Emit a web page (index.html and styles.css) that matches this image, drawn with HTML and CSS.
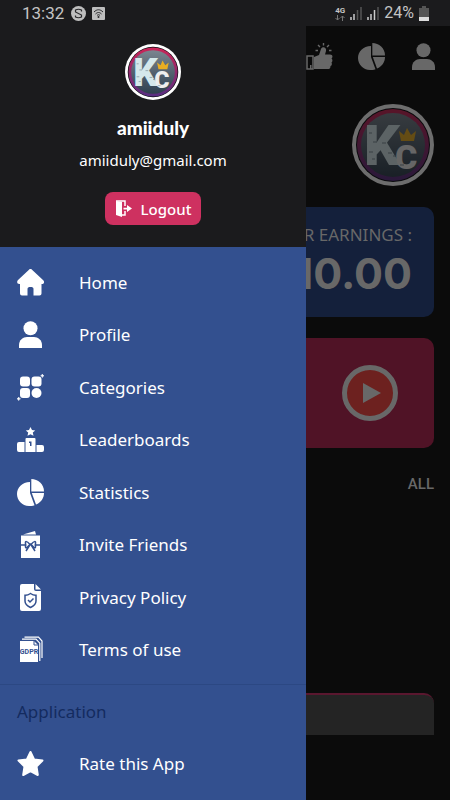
FILE: index.html
```html
<!DOCTYPE html>
<html lang="en">
<head>
<meta charset="utf-8">
<meta name="viewport" content="width=device-width, initial-scale=1">
<title>Menu</title>
<link rel="stylesheet" href="styles.css">
</head>
<body>
<svg class="defs" aria-hidden="true">
  <defs>
    <linearGradient id="ring" x1="0" y1="0" x2="0" y2="1"><stop offset="0" stop-color="#cc2456"/><stop offset="1" stop-color="#572e82"/></linearGradient>
    <linearGradient id="disc" x1="0" y1="0" x2="0" y2="1"><stop offset="0" stop-color="#7a8590"/><stop offset="1" stop-color="#2f4050"/></linearGradient>
    <symbol id="logo" viewBox="0 0 82 82">
      <circle cx="41" cy="41" r="41" fill="#fff"/>
      <circle cx="41" cy="41" r="37" fill="#080a0f"/>
      <circle cx="41" cy="41" r="36" fill="url(#ring)"/>
      <circle cx="41" cy="41" r="32" fill="url(#disc)"/>
      <text class="logo-k" x="12" y="61">K</text>
      <text class="logo-c" x="43" y="65">C</text>
      <path d="M49 37L47 27L52 31L55 24L59 31L64 27L62 37Z" fill="#e9ad22"/>
      <path d="M17 29h3m1 9h4m-8 10h4m9-9h4m2 10h4m-20 6h3m18-3h3m4 9h4" stroke="#7d8d99" stroke-width="1" fill="none"/>
    </symbol>
    <symbol id="person" viewBox="0 0 27 27"><circle cx="13.500" cy="7.200" r="7"/><path d="M2 27v-3c0-5 4-8 8-8h7c4 0 8 3 8 8v3z"/></symbol>
    <symbol id="pie" viewBox="0 0 27 27"><path d="M13 3v11l4.500 12.300A12 12 0 0 1 12 27C5 27 0 21 0 15S5 3 13 3z"/><path d="M14.300 0C21 0 27 5 27 12.500H14.300z"/><path d="M14.800 14H27c0 5-3 9.500-8 11.500z"/></symbol>
  </defs>
</svg>

<div class="phone">
  <header class="status">
    <time class="clock">13:32</time>
    <svg class="status-icon" viewBox="0 0 15 15"><circle cx="7.500" cy="7.500" r="7.500" fill="#bebebe"/><path d="M10.500 5.500V4q-3-1.500-6 0v2l6 3v2q-3 1.500-6 0V9.500" fill="none" stroke="#29292b" stroke-width="1.200"/></svg>
    <svg class="status-icon" viewBox="0 0 15 15"><rect x="1" y="1" width="13" height="13" rx="1" fill="#bebebe"/><path d="M3 6c3-3 6-3 9 0M4.500 8c2-2 4-2 6 0M6 9.500c1-1 2-1 3 0" fill="none" stroke="#29292b"/><circle cx="7.500" cy="11" r="1" fill="#29292b"/></svg>
    <span class="spacer"></span>
    <span class="network">4G<svg viewBox="0 0 10 6"><path d="M2.500 0v5M.5 3l2 2 2-2M7.500 6V1M5.500 3l2-2 2 2" fill="none" stroke="#777"/></svg></span>
    <svg class="signal" viewBox="0 0 12 14"><path d="M1 11v3M4 8v6" stroke="#ccc" stroke-width="1.500"/><path d="M7.500 4v10M11 1v13" stroke="#555" stroke-width="1.500"/></svg>
    <svg class="signal" viewBox="0 0 12 14"><path d="M1 11v3M4 8v6M7.500 4v10" stroke="#ccc" stroke-width="1.500"/><path d="M11 1v13" stroke="#555" stroke-width="1.500"/></svg>
    <span class="percent">24%</span>
    <svg class="battery" viewBox="0 0 10 15"><path d="M3 0h4v2h3v13H0V2h3z" fill="#555"/><path d="M0 11h10v4H0z" fill="#ddd"/></svg>
  </header>

  <main class="screen">
    <nav class="toolbar" aria-label="Shortcuts">
      <a href="#" aria-label="Like"><svg viewBox="0 0 27 27"><path d="M1 13h6v13H1z" fill="none" stroke="currentColor" stroke-width="1.500"/><path d="M4 22h1.500v4H4zM8 14l5-2 2-6c1-3 6-2 5 2l-1 3.500h5c3 0 3 3 1.500 4 1.500 1 1 3.500 0 4 1 1.500 0 3.500-1 3.500 0 2.500-1 3-3 3H8z"/><path d="M12 7.500H9.500M14 4l-2-2M17.500 2.500V0M21 4l2-2M23 7.500h2.500" stroke="currentColor" stroke-width="1.400"/></svg></a>
      <a href="#" aria-label="Statistics"><svg><use href="#pie"/></svg></a>
      <a href="#" aria-label="Profile"><svg><use href="#person"/></svg></a>
    </nav>
    <svg class="avatar" role="img" aria-label="KC"><use href="#logo"/></svg>
    <section class="card earnings">
      <h2>YOUR EARNINGS :</h2>
      <p>10.00</p>
    </section>
    <section class="card video">
      <button type="button" class="play" aria-label="Play"><svg viewBox="0 0 20 22"><path d="M1 1l18 10L1 21z"/></svg></button>
    </section>
    <a class="all" href="#">ALL</a>
    <section class="tile"></section>
  </main>

  <aside class="drawer">
    <div class="account">
      <svg class="badge" role="img" aria-label="KC"><use href="#logo"/></svg>
      <h1>amiiduly</h1>
      <p>amiiduly@gmail.com</p>
      <button type="button" class="logout"><svg viewBox="0 0 17 17"><path d="M1 1l6 1v15l-6-2z"/><path d="M1 1h9v5M7 15h3v-4" fill="none" stroke="currentColor" stroke-width="1.500"/><path d="M8.500 7.700H12V5l5 3.500-5 3.500V9.500H8.500z"/></svg>Logout</button>
    </div>
    <nav class="menu" aria-label="Main">
      <ul class="main-links">
        <li><a href="#"><svg viewBox="0 0 27 27"><path d="M12 .7a2 2 0 0 1 3 0L26 11c2 2 1 4-1 4h-.5v9.500a2 2 0 0 1-2 2H16.500V20c0-1.500-1-2-3-2s-3 .5-3 2v6.500H5a2 2 0 0 1-2-2V15h-.7C0 15-.5 12.500 1 11z"/></svg>Home</a></li>
        <li><a href="#"><svg><use href="#person"/></svg>Profile</a></li>
        <li><a href="#"><svg viewBox="0 0 27 27"><rect x="3" y="2.500" width="10" height="10" rx="3"/><rect x="14.500" y="2.500" width="10" height="10" rx="3"/><rect x="3" y="14" width="10" height="10" rx="3"/><circle cx="19.500" cy="19" r="5"/><path d="M25.300 0l.6 1.300 1.100.5-1.100.5-.6 1.300-.6-1.300-1.100-.5 1.100-.5zM1.700 23l.6 1.200 1.200.6-1.200.6-.6 1.200-.6-1.200-1.100-.6 1.100-.6z" stroke="currentColor" stroke-width=".5"/></svg>Categories</a></li>
        <li><a href="#"><svg viewBox="0 0 27 27"><path d="M13.500 1l1.500 3 3.200.4-2.400 2.200.7 3.200-3-1.600-3 1.600.7-3.200L8.800 4.400 12 4z"/><path fill-rule="evenodd" d="M9.500 12h8q1 0 1 1v13h-10V13q0-1 1-1zM12 15.500V17h1v3h1.500v-4.500z"/><path d="M2 16h5.500v10H2q-2 0-2-2v-6q0-2 2-2zM19.500 19H25q2 0 2 2v3q0 2-2 2h-5.500z"/></svg>Leaderboards</a></li>
        <li><a href="#"><svg><use href="#pie"/></svg>Statistics</a></li>
        <li><a href="#"><svg viewBox="0 0 27 27"><path d="M6 3.500L18 0l1 3.500zM4 4.500h19V27H4z"/><path class="cut" d="M4 14h5.500m8 0H23M12.500 13C10 10 8 10 8.500 12v4c.5 2 2 0 4-2h2c2 2 3.500 4 4 2v-4c.5-2-1.500-2-4 1zM12.500 14.500L9 20m5.500-5.500L18 20"/></svg>Invite Friends</a></li>
        <li><a href="#"><svg viewBox="0 0 27 27"><path d="M5 0h12v5q0 2 2 2h5v18q0 2-2 2H5q-2 0-2-2V2q0-2 2-2zM18.500 0L24 5.500h-5.500z"/><path class="cut" d="M13.500 9.500q3 2 5.500 1.800V17q0 4-5.500 6.500Q8 21 8 17v-5.700q2.500.2 5.500-1.800zM11 16l2 2 3.500-3.500"/></svg>Privacy Policy</a></li>
        <li><a href="#"><svg viewBox="0 0 27 27"><path d="M3 5h14l4 4v17H3z"/><path d="M5 3.200h14l3.800 4V25M7.500 1.200h14L25 5v17" fill="none" stroke="currentColor" stroke-width="1.200"/><path class="cut thin" d="M17 5v4h4"/><text class="gdpr" x="12" y="18" text-anchor="middle">GDPR</text></svg>Terms of use</a></li>
      </ul>
      <h2>Application</h2>
      <ul class="app-links">
        <li><a href="#"><svg viewBox="0 0 27 27"><path d="M13.500 2l3.600 7.500 8.400 1-6 6 1.300 8.500-7.300-4-7.300 4 1.300-8.500-6-6 8.400-1z" stroke="currentColor" stroke-width="2" stroke-linejoin="round"/></svg>Rate this App</a></li>
      </ul>
    </nav>
  </aside>
</div>
</body>
</html>
```

FILE: styles.css
```css
* { box-sizing: border-box; }
body, h1, h2, p, ul { margin: 0; padding: 0; }
body {
  background: #0b0b0b;
  color: #fff;
  font-family: "Noto Sans", "Open Sans", sans-serif;
}
ul { list-style: none; }
a { color: inherit; text-decoration: none; }
button { border: 0; font: inherit; color: inherit; cursor: pointer; }
svg { display: block; fill: currentColor; }
.defs { position: absolute; width: 0; height: 0; }

.phone {
  position: relative;
  min-height: 100vh;
  overflow: hidden;
}

/* System status bar */
.status {
  position: relative;
  z-index: 2;
  display: flex;
  align-items: center;
  gap: 5px;
  height: 26px;
  padding: 0 21px 0 22px;
  background: #1b1b1d;
  color: #c4c4c4;
  font-family: Roboto, sans-serif;
}
.clock { margin-right: 2px; font-size: 17px; line-height: 28px; }
.status-icon { width: 15px; height: 15px; }
.spacer { flex: 1; }
.network { font-size: 8px; font-weight: 700; line-height: 9px; text-align: center; }
.network svg { width: 10px; height: 6px; }
.signal { width: 12px; height: 14px; }
.percent { font-size: 16px; line-height: 28px; }
.battery { width: 10px; height: 15px; }

/* Dimmed screen behind the drawer */
.screen {
  display: flex;
  flex-direction: column;
  align-items: stretch;
  padding: 17px 16px 0;
  color: #686868;
}
.toolbar {
  display: flex;
  justify-content: flex-end;
  gap: 25px;
  margin-right: -3px;
}
.toolbar svg { width: 27px; height: 27px; }
.avatar {
  align-self: flex-end;
  width: 82px;
  height: 82px;
  margin-top: 34px;
  opacity: 0.4;
}
.card { height: 110px; border-radius: 10px; }
.earnings {
  margin-top: 21px;
  padding: 16px 22px;
  background: #14203b;
  text-align: right;
}
.earnings h2 { font-size: 17px; font-weight: 400; line-height: 24px; }
.earnings p { font-family: Inter, sans-serif; font-size: 43px; font-weight: 700; line-height: 52px; }
.video {
  display: flex;
  align-items: center;
  justify-content: flex-end;
  margin-top: 21px;
  padding-right: 36px;
  background: #501326;
}
.play {
  display: grid;
  place-items: center;
  width: 56px;
  height: 56px;
  padding: 0 0 0 3px;
  border: 5px solid #686868;
  border-radius: 50%;
  background: #6d211f;
}
.play svg { width: 20px; height: 22px; }
.all {
  align-self: flex-end;
  margin-top: 24px;
  font-family: Roboto, sans-serif;
  font-size: 15px;
  font-weight: 500;
  line-height: 24px;
}
.tile {
  height: 42px;
  margin-top: 197px;
  border-top: 2px solid #5a172f;
  border-radius: 10px 10px 0 0;
  background: #242424;
}

/* Navigation drawer */
.drawer {
  position: absolute;
  z-index: 1;
  top: 0;
  bottom: 0;
  left: 0;
  display: flex;
  flex-direction: column;
  width: 68%;
  background: #33508f;
}
.account {
  display: flex;
  flex-direction: column;
  align-items: center;
  padding: 44px 16px 22px;
  background: #1b1b1d;
}
.badge { width: 56px; height: 56px; }
.account h1 {
  margin-top: 16px;
  font-family: Lato, sans-serif;
  font-size: 19px;
  font-weight: 900;
  line-height: 24px;
}
.account p { margin-top: 8px; font-size: 15px; line-height: 24px; }
.logout {
  display: flex;
  align-items: center;
  gap: 9px;
  height: 33px;
  margin-top: 20px;
  padding: 0 10px;
  border-radius: 8px;
  background: #ce3160;
  font-size: 15px;
  font-weight: 500;
}
.logout svg { width: 17px; height: 17px; }

.menu { flex: 1; padding-top: 9px; }
.main-links { display: grid; grid-auto-rows: 1fr; min-height: 420px; }
.menu a {
  display: flex;
  align-items: center;
  gap: 35px;
  height: 100%;
  padding: 0 17px;
  font-size: 17px;
}
.menu svg { width: 27px; height: 27px; }
.menu h2 {
  margin-top: 8px;
  padding: 15px 17px 13px;
  border-top: 1px solid #2c4883;
  color: #142b5f;
  font-size: 17px;
  font-weight: 400;
  line-height: 24px;
}
.app-links li { height: 53px; }

.cut { fill: none; stroke: #33508f; stroke-width: 1.5; }
.thin { stroke-width: 1; }
.gdpr { fill: #33508f; font: 700 7px Roboto, sans-serif; }
.logo-k { fill: #d5e8eb; font: 900 56px Roboto, sans-serif; }
.logo-c { fill: #eee; font: 900 34px Roboto, sans-serif; }
```
